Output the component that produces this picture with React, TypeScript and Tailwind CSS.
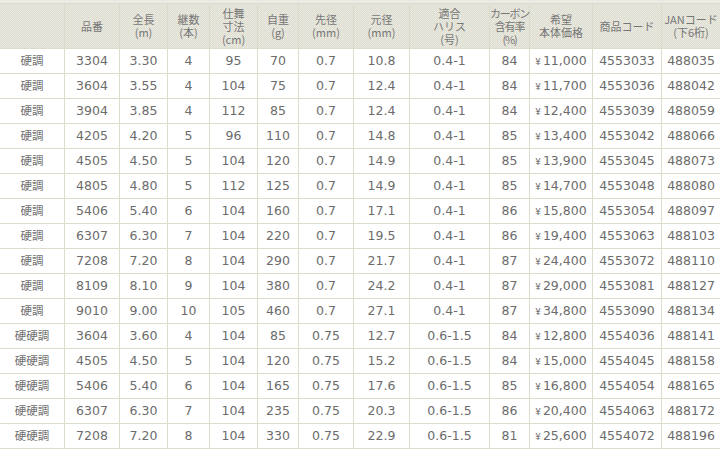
import React from "react";

const widths = [65, 55, 48, 42, 48, 41, 55, 56, 80, 40, 63, 69, 58];
const gridCols =
  "grid grid-cols-[65px_55px_48px_42px_48px_41px_55px_56px_80px_40px_63px_69px_58px]";

const headers: string[][] = [
  [],
  ["品番"],
  ["全長", "(m)"],
  ["継数", "(本)"],
  ["仕舞", "寸法", "(cm)"],
  ["自重", "(g)"],
  ["先径", "(mm)"],
  ["元径", "(mm)"],
  ["適合", "ハリス", "(号)"],
  ["カーボン", "含有率", "(%)"],
  ["希望", "本体価格"],
  ["商品コード"],
  ["JANコード", "(下6桁)"],
];

const rows: string[][] = [
  ["硬調", "3304", "3.30", "4", "95", "70", "0.7", "10.8", "0.4-1", "84", "11,000", "4553033", "488035"],
  ["硬調", "3604", "3.55", "4", "104", "75", "0.7", "12.4", "0.4-1", "84", "11,700", "4553036", "488042"],
  ["硬調", "3904", "3.85", "4", "112", "85", "0.7", "12.4", "0.4-1", "84", "12,400", "4553039", "488059"],
  ["硬調", "4205", "4.20", "5", "96", "110", "0.7", "14.8", "0.4-1", "85", "13,400", "4553042", "488066"],
  ["硬調", "4505", "4.50", "5", "104", "120", "0.7", "14.9", "0.4-1", "85", "13,900", "4553045", "488073"],
  ["硬調", "4805", "4.80", "5", "112", "125", "0.7", "14.9", "0.4-1", "85", "14,700", "4553048", "488080"],
  ["硬調", "5406", "5.40", "6", "104", "160", "0.7", "17.1", "0.4-1", "86", "15,800", "4553054", "488097"],
  ["硬調", "6307", "6.30", "7", "104", "220", "0.7", "19.5", "0.4-1", "86", "19,400", "4553063", "488103"],
  ["硬調", "7208", "7.20", "8", "104", "290", "0.7", "21.7", "0.4-1", "87", "24,400", "4553072", "488110"],
  ["硬調", "8109", "8.10", "9", "104", "380", "0.7", "24.2", "0.4-1", "87", "29,000", "4553081", "488127"],
  ["硬調", "9010", "9.00", "10", "105", "460", "0.7", "27.1", "0.4-1", "87", "34,800", "4553090", "488134"],
  ["硬硬調", "3604", "3.60", "4", "104", "85", "0.75", "12.7", "0.6-1.5", "84", "12,800", "4554036", "488141"],
  ["硬硬調", "4505", "4.50", "5", "104", "120", "0.75", "15.2", "0.6-1.5", "84", "15,000", "4554045", "488158"],
  ["硬硬調", "5406", "5.40", "6", "104", "165", "0.75", "17.6", "0.6-1.5", "85", "16,800", "4554054", "488165"],
  ["硬硬調", "6307", "6.30", "7", "104", "235", "0.75", "20.3", "0.6-1.5", "86", "20,400", "4554063", "488172"],
  ["硬硬調", "7208", "7.20", "8", "104", "330", "0.75", "22.9", "0.6-1.5", "81", "25,600", "4554072", "488196"],
];

export default function App() {
  return (
    <div
      className="w-[720px] h-[455px] bg-white overflow-hidden"
      style={{ fontFamily: '"DejaVu Sans", "Noto Sans CJK JP", sans-serif' }}
    >
      <div className="h-[3px] bg-[#ebebe4]" />
      <div
        className={`${gridCols} h-[46px] border-y border-[#dcdccd] bg-[#e5e4da] bg-[repeating-conic-gradient(#dddcd0_0%_25%,#ebeae1_0%_50%)] bg-[length:2px_2px]`}
      >
        {headers.map((h, i) => (
          <div
            key={i}
            className={`flex items-center justify-center text-center text-[11px] leading-[13px] text-[#767676] whitespace-nowrap ${
              i === 9 ? "tracking-[-1.2px]" : ""
            } ${i < widths.length - 1 ? "border-r border-[#dcdccd]" : ""}`}
            style={{ fontFamily: '"Noto Sans CJK JP", sans-serif' }}
          >
            {h.length > 0 && (
              <p className="leading-[13px]">
                {h.map((line, j) => (
                  <React.Fragment key={j}>
                    {j > 0 && <br />}
                    {line}
                  </React.Fragment>
                ))}
              </p>
            )}
          </div>
        ))}
      </div>
      {rows.map((r, ri) => (
        <div key={ri} className={`${gridCols} h-[25px] border-b border-[#dcdccd]`}>
          {r.map((c, ci) => (
            <div
              key={ci}
              className={`flex items-center justify-center text-[12.5px] text-[#6c6c6c] whitespace-nowrap ${
                ci < widths.length - 1 ? "border-r border-[#dcdccd]" : ""
              }`}
            >
              {ci === 0 ? (
                <span
                  className="text-[11.5px] text-[#707070]"
                  style={{ fontFamily: '"Noto Sans CJK JP", sans-serif' }}
                >
                  {c}
                </span>
              ) : ci === 10 ? (
                <span>
                  <span
                    className="text-[10px] mr-[2px]"
                    style={{ fontFamily: '"Noto Sans CJK JP", sans-serif' }}
                  >
                    ¥
                  </span>
                  {c}
                </span>
              ) : (
                c
              )}
            </div>
          ))}
        </div>
      ))}
    </div>
  );
}
